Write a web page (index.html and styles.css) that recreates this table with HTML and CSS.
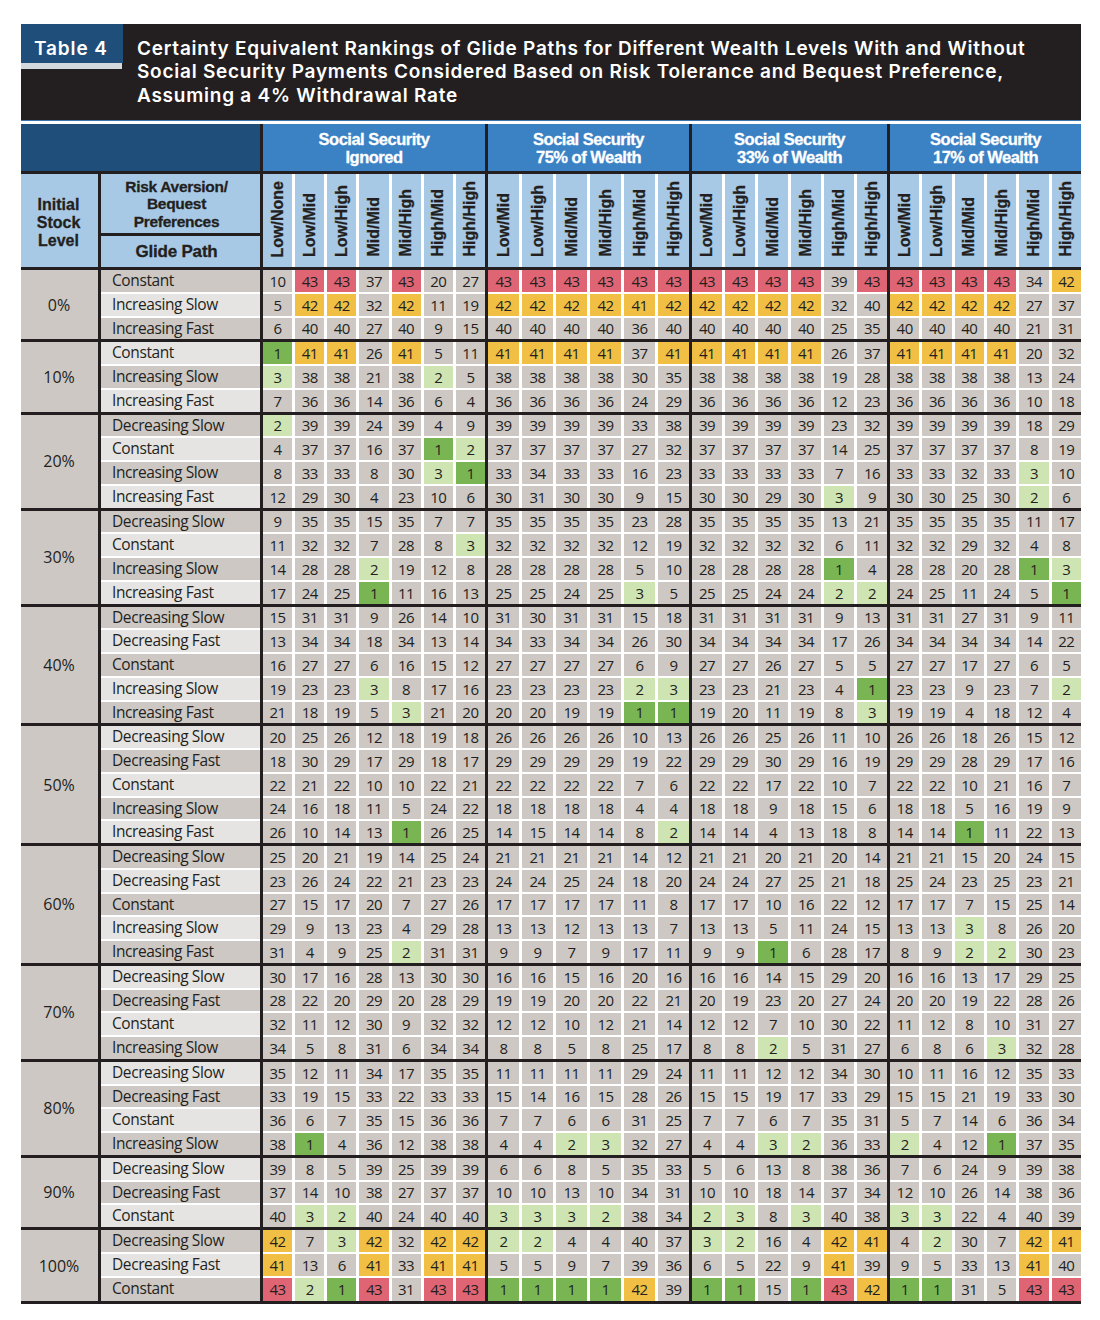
FILE: index.html
```html
<!DOCTYPE html>
<html lang="en">
<head>
<meta charset="utf-8">
<title>Table 4</title>
<link rel="stylesheet" href="styles.css">
</head>
<body>
<div class="page">
  <div class="title">
    <div class="tag"><div class="tag-label">Table 4</div><div class="tag-strip"></div></div>
    <div class="title-text">Certainty Equivalent Rankings of Glide Paths for Different Wealth Levels With and Without<br>Social Security Payments Considered Based on Risk Tolerance and Bequest Preference,<br>Assuming a 4% Withdrawal Rate</div>
  </div>
  <div class="table">
    <div class="row hrow1">
      <div class="corner"></div>
      <div class="ghead w1">Social Security<br>Ignored</div>
      <div class="ghead w2">Social Security<br>75% of Wealth</div>
      <div class="ghead w3">Social Security<br>33% of Wealth</div>
      <div class="ghead w4">Social Security<br>17% of Wealth</div>
    </div>
    <div class="row hrow2">
      <div class="hstock">Initial<br>Stock<br>Level</div>
      <div class="hglide"><div class="hrisk">Risk Aversion/<br>Bequest<br>Preferences</div><div class="hpath">Glide Path</div></div>
      <div class="hcols w1 c7"><div class="vh"><span>Low/None</span></div><div class="vh"><span>Low/Mid</span></div><div class="vh"><span>Low/High</span></div><div class="vh"><span>Mid/Mid</span></div><div class="vh"><span>Mid/High</span></div><div class="vh"><span>High/Mid</span></div><div class="vh"><span>High/High</span></div></div>
      <div class="hcols w2 c6"><div class="vh"><span>Low/Mid</span></div><div class="vh"><span>Low/High</span></div><div class="vh"><span>Mid/Mid</span></div><div class="vh"><span>Mid/High</span></div><div class="vh"><span>High/Mid</span></div><div class="vh"><span>High/High</span></div></div>
      <div class="hcols w3 c6"><div class="vh"><span>Low/Mid</span></div><div class="vh"><span>Low/High</span></div><div class="vh"><span>Mid/Mid</span></div><div class="vh"><span>Mid/High</span></div><div class="vh"><span>High/Mid</span></div><div class="vh"><span>High/High</span></div></div>
      <div class="hcols w4 c6"><div class="vh"><span>Low/Mid</span></div><div class="vh"><span>Low/High</span></div><div class="vh"><span>Mid/Mid</span></div><div class="vh"><span>Mid/High</span></div><div class="vh"><span>High/Mid</span></div><div class="vh"><span>High/High</span></div></div>
    </div>

    <!-- 0% -->
    <div class="row grp">
      <div class="stock">0%</div>
      <div class="glide"><span>Constant</span><span class="a">Increasing Slow</span><span>Increasing Fast</span></div>
      <div class="blk w1 c7">
        <span>10</span><span class="r">43</span><span class="r">43</span><span>37</span><span class="r">43</span><span>20</span><span>27</span>
        <span>5</span><span class="y">42</span><span class="y">42</span><span>32</span><span class="y">42</span><span>11</span><span>19</span>
        <span>6</span><span>40</span><span>40</span><span>27</span><span>40</span><span>9</span><span>15</span>
      </div>
      <div class="blk w2 c6">
        <span class="r">43</span><span class="r">43</span><span class="r">43</span><span class="r">43</span><span class="r">43</span><span class="r">43</span>
        <span class="y">42</span><span class="y">42</span><span class="y">42</span><span class="y">42</span><span class="y">41</span><span class="y">42</span>
        <span>40</span><span>40</span><span>40</span><span>40</span><span>36</span><span>40</span>
      </div>
      <div class="blk w3 c6">
        <span class="r">43</span><span class="r">43</span><span class="r">43</span><span class="r">43</span><span>39</span><span class="r">43</span>
        <span class="y">42</span><span class="y">42</span><span class="y">42</span><span class="y">42</span><span>32</span><span>40</span>
        <span>40</span><span>40</span><span>40</span><span>40</span><span>25</span><span>35</span>
      </div>
      <div class="blk w4 c6">
        <span class="r">43</span><span class="r">43</span><span class="r">43</span><span class="r">43</span><span>34</span><span class="y">42</span>
        <span class="y">42</span><span class="y">42</span><span class="y">42</span><span class="y">42</span><span>27</span><span>37</span>
        <span>40</span><span>40</span><span>40</span><span>40</span><span>21</span><span>31</span>
      </div>
    </div>

    <!-- 10% -->
    <div class="row grp">
      <div class="stock">10%</div>
      <div class="glide"><span class="a">Constant</span><span>Increasing Slow</span><span class="a">Increasing Fast</span></div>
      <div class="blk w1 c7">
        <span class="g">1</span><span class="y">41</span><span class="y">41</span><span>26</span><span class="y">41</span><span>5</span><span>11</span>
        <span class="l">3</span><span>38</span><span>38</span><span>21</span><span>38</span><span class="l">2</span><span>5</span>
        <span>7</span><span>36</span><span>36</span><span>14</span><span>36</span><span>6</span><span>4</span>
      </div>
      <div class="blk w2 c6">
        <span class="y">41</span><span class="y">41</span><span class="y">41</span><span class="y">41</span><span>37</span><span class="y">41</span>
        <span>38</span><span>38</span><span>38</span><span>38</span><span>30</span><span>35</span>
        <span>36</span><span>36</span><span>36</span><span>36</span><span>24</span><span>29</span>
      </div>
      <div class="blk w3 c6">
        <span class="y">41</span><span class="y">41</span><span class="y">41</span><span class="y">41</span><span>26</span><span>37</span>
        <span>38</span><span>38</span><span>38</span><span>38</span><span>19</span><span>28</span>
        <span>36</span><span>36</span><span>36</span><span>36</span><span>12</span><span>23</span>
      </div>
      <div class="blk w4 c6">
        <span class="y">41</span><span class="y">41</span><span class="y">41</span><span class="y">41</span><span>20</span><span>32</span>
        <span>38</span><span>38</span><span>38</span><span>38</span><span>13</span><span>24</span>
        <span>36</span><span>36</span><span>36</span><span>36</span><span>10</span><span>18</span>
      </div>
    </div>

    <!-- 20% -->
    <div class="row grp">
      <div class="stock">20%</div>
      <div class="glide"><span>Decreasing Slow</span><span class="a">Constant</span><span>Increasing Slow</span><span class="a">Increasing Fast</span></div>
      <div class="blk w1 c7">
        <span class="l">2</span><span>39</span><span>39</span><span>24</span><span>39</span><span>4</span><span>9</span>
        <span>4</span><span>37</span><span>37</span><span>16</span><span>37</span><span class="g">1</span><span class="l">2</span>
        <span>8</span><span>33</span><span>33</span><span>8</span><span>30</span><span class="l">3</span><span class="g">1</span>
        <span>12</span><span>29</span><span>30</span><span>4</span><span>23</span><span>10</span><span>6</span>
      </div>
      <div class="blk w2 c6">
        <span>39</span><span>39</span><span>39</span><span>39</span><span>33</span><span>38</span>
        <span>37</span><span>37</span><span>37</span><span>37</span><span>27</span><span>32</span>
        <span>33</span><span>34</span><span>33</span><span>33</span><span>16</span><span>23</span>
        <span>30</span><span>31</span><span>30</span><span>30</span><span>9</span><span>15</span>
      </div>
      <div class="blk w3 c6">
        <span>39</span><span>39</span><span>39</span><span>39</span><span>23</span><span>32</span>
        <span>37</span><span>37</span><span>37</span><span>37</span><span>14</span><span>25</span>
        <span>33</span><span>33</span><span>33</span><span>33</span><span>7</span><span>16</span>
        <span>30</span><span>30</span><span>29</span><span>30</span><span class="l">3</span><span>9</span>
      </div>
      <div class="blk w4 c6">
        <span>39</span><span>39</span><span>39</span><span>39</span><span>18</span><span>29</span>
        <span>37</span><span>37</span><span>37</span><span>37</span><span>8</span><span>19</span>
        <span>33</span><span>33</span><span>32</span><span>33</span><span class="l">3</span><span>10</span>
        <span>30</span><span>30</span><span>25</span><span>30</span><span class="l">2</span><span>6</span>
      </div>
    </div>

    <!-- 30% -->
    <div class="row grp">
      <div class="stock">30%</div>
      <div class="glide"><span>Decreasing Slow</span><span class="a">Constant</span><span>Increasing Slow</span><span class="a">Increasing Fast</span></div>
      <div class="blk w1 c7">
        <span>9</span><span>35</span><span>35</span><span>15</span><span>35</span><span>7</span><span>7</span>
        <span>11</span><span>32</span><span>32</span><span>7</span><span>28</span><span>8</span><span class="l">3</span>
        <span>14</span><span>28</span><span>28</span><span class="l">2</span><span>19</span><span>12</span><span>8</span>
        <span>17</span><span>24</span><span>25</span><span class="g">1</span><span>11</span><span>16</span><span>13</span>
      </div>
      <div class="blk w2 c6">
        <span>35</span><span>35</span><span>35</span><span>35</span><span>23</span><span>28</span>
        <span>32</span><span>32</span><span>32</span><span>32</span><span>12</span><span>19</span>
        <span>28</span><span>28</span><span>28</span><span>28</span><span>5</span><span>10</span>
        <span>25</span><span>25</span><span>24</span><span>25</span><span class="l">3</span><span>5</span>
      </div>
      <div class="blk w3 c6">
        <span>35</span><span>35</span><span>35</span><span>35</span><span>13</span><span>21</span>
        <span>32</span><span>32</span><span>32</span><span>32</span><span>6</span><span>11</span>
        <span>28</span><span>28</span><span>28</span><span>28</span><span class="g">1</span><span>4</span>
        <span>25</span><span>25</span><span>24</span><span>24</span><span class="l">2</span><span class="l">2</span>
      </div>
      <div class="blk w4 c6">
        <span>35</span><span>35</span><span>35</span><span>35</span><span>11</span><span>17</span>
        <span>32</span><span>32</span><span>29</span><span>32</span><span>4</span><span>8</span>
        <span>28</span><span>28</span><span>20</span><span>28</span><span class="g">1</span><span class="l">3</span>
        <span>24</span><span>25</span><span>11</span><span>24</span><span>5</span><span class="g">1</span>
      </div>
    </div>

    <!-- 40% -->
    <div class="row grp">
      <div class="stock">40%</div>
      <div class="glide"><span>Decreasing Slow</span><span class="a">Decreasing Fast</span><span>Constant</span><span class="a">Increasing Slow</span><span>Increasing Fast</span></div>
      <div class="blk w1 c7">
        <span>15</span><span>31</span><span>31</span><span>9</span><span>26</span><span>14</span><span>10</span>
        <span>13</span><span>34</span><span>34</span><span>18</span><span>34</span><span>13</span><span>14</span>
        <span>16</span><span>27</span><span>27</span><span>6</span><span>16</span><span>15</span><span>12</span>
        <span>19</span><span>23</span><span>23</span><span class="l">3</span><span>8</span><span>17</span><span>16</span>
        <span>21</span><span>18</span><span>19</span><span>5</span><span class="l">3</span><span>21</span><span>20</span>
      </div>
      <div class="blk w2 c6">
        <span>31</span><span>30</span><span>31</span><span>31</span><span>15</span><span>18</span>
        <span>34</span><span>33</span><span>34</span><span>34</span><span>26</span><span>30</span>
        <span>27</span><span>27</span><span>27</span><span>27</span><span>6</span><span>9</span>
        <span>23</span><span>23</span><span>23</span><span>23</span><span class="l">2</span><span class="l">3</span>
        <span>20</span><span>20</span><span>19</span><span>19</span><span class="g">1</span><span class="g">1</span>
      </div>
      <div class="blk w3 c6">
        <span>31</span><span>31</span><span>31</span><span>31</span><span>9</span><span>13</span>
        <span>34</span><span>34</span><span>34</span><span>34</span><span>17</span><span>26</span>
        <span>27</span><span>27</span><span>26</span><span>27</span><span>5</span><span>5</span>
        <span>23</span><span>23</span><span>21</span><span>23</span><span>4</span><span class="g">1</span>
        <span>19</span><span>20</span><span>11</span><span>19</span><span>8</span><span class="l">3</span>
      </div>
      <div class="blk w4 c6">
        <span>31</span><span>31</span><span>27</span><span>31</span><span>9</span><span>11</span>
        <span>34</span><span>34</span><span>34</span><span>34</span><span>14</span><span>22</span>
        <span>27</span><span>27</span><span>17</span><span>27</span><span>6</span><span>5</span>
        <span>23</span><span>23</span><span>9</span><span>23</span><span>7</span><span class="l">2</span>
        <span>19</span><span>19</span><span>4</span><span>18</span><span>12</span><span>4</span>
      </div>
    </div>

    <!-- 50% -->
    <div class="row grp">
      <div class="stock">50%</div>
      <div class="glide"><span class="a">Decreasing Slow</span><span>Decreasing Fast</span><span class="a">Constant</span><span>Increasing Slow</span><span class="a">Increasing Fast</span></div>
      <div class="blk w1 c7">
        <span>20</span><span>25</span><span>26</span><span>12</span><span>18</span><span>19</span><span>18</span>
        <span>18</span><span>30</span><span>29</span><span>17</span><span>29</span><span>18</span><span>17</span>
        <span>22</span><span>21</span><span>22</span><span>10</span><span>10</span><span>22</span><span>21</span>
        <span>24</span><span>16</span><span>18</span><span>11</span><span>5</span><span>24</span><span>22</span>
        <span>26</span><span>10</span><span>14</span><span>13</span><span class="g">1</span><span>26</span><span>25</span>
      </div>
      <div class="blk w2 c6">
        <span>26</span><span>26</span><span>26</span><span>26</span><span>10</span><span>13</span>
        <span>29</span><span>29</span><span>29</span><span>29</span><span>19</span><span>22</span>
        <span>22</span><span>22</span><span>22</span><span>22</span><span>7</span><span>6</span>
        <span>18</span><span>18</span><span>18</span><span>18</span><span>4</span><span>4</span>
        <span>14</span><span>15</span><span>14</span><span>14</span><span>8</span><span class="l">2</span>
      </div>
      <div class="blk w3 c6">
        <span>26</span><span>26</span><span>25</span><span>26</span><span>11</span><span>10</span>
        <span>29</span><span>29</span><span>30</span><span>29</span><span>16</span><span>19</span>
        <span>22</span><span>22</span><span>17</span><span>22</span><span>10</span><span>7</span>
        <span>18</span><span>18</span><span>9</span><span>18</span><span>15</span><span>6</span>
        <span>14</span><span>14</span><span>4</span><span>13</span><span>18</span><span>8</span>
      </div>
      <div class="blk w4 c6">
        <span>26</span><span>26</span><span>18</span><span>26</span><span>15</span><span>12</span>
        <span>29</span><span>29</span><span>28</span><span>29</span><span>17</span><span>16</span>
        <span>22</span><span>22</span><span>10</span><span>21</span><span>16</span><span>7</span>
        <span>18</span><span>18</span><span>5</span><span>16</span><span>19</span><span>9</span>
        <span>14</span><span>14</span><span class="g">1</span><span>11</span><span>22</span><span>13</span>
      </div>
    </div>

    <!-- 60% -->
    <div class="row grp">
      <div class="stock">60%</div>
      <div class="glide"><span>Decreasing Slow</span><span class="a">Decreasing Fast</span><span>Constant</span><span class="a">Increasing Slow</span><span>Increasing Fast</span></div>
      <div class="blk w1 c7">
        <span>25</span><span>20</span><span>21</span><span>19</span><span>14</span><span>25</span><span>24</span>
        <span>23</span><span>26</span><span>24</span><span>22</span><span>21</span><span>23</span><span>23</span>
        <span>27</span><span>15</span><span>17</span><span>20</span><span>7</span><span>27</span><span>26</span>
        <span>29</span><span>9</span><span>13</span><span>23</span><span>4</span><span>29</span><span>28</span>
        <span>31</span><span>4</span><span>9</span><span>25</span><span class="l">2</span><span>31</span><span>31</span>
      </div>
      <div class="blk w2 c6">
        <span>21</span><span>21</span><span>21</span><span>21</span><span>14</span><span>12</span>
        <span>24</span><span>24</span><span>25</span><span>24</span><span>18</span><span>20</span>
        <span>17</span><span>17</span><span>17</span><span>17</span><span>11</span><span>8</span>
        <span>13</span><span>13</span><span>12</span><span>13</span><span>13</span><span>7</span>
        <span>9</span><span>9</span><span>7</span><span>9</span><span>17</span><span>11</span>
      </div>
      <div class="blk w3 c6">
        <span>21</span><span>21</span><span>20</span><span>21</span><span>20</span><span>14</span>
        <span>24</span><span>24</span><span>27</span><span>25</span><span>21</span><span>18</span>
        <span>17</span><span>17</span><span>10</span><span>16</span><span>22</span><span>12</span>
        <span>13</span><span>13</span><span>5</span><span>11</span><span>24</span><span>15</span>
        <span>9</span><span>9</span><span class="g">1</span><span>6</span><span>28</span><span>17</span>
      </div>
      <div class="blk w4 c6">
        <span>21</span><span>21</span><span>15</span><span>20</span><span>24</span><span>15</span>
        <span>25</span><span>24</span><span>23</span><span>25</span><span>23</span><span>21</span>
        <span>17</span><span>17</span><span>7</span><span>15</span><span>25</span><span>14</span>
        <span>13</span><span>13</span><span class="l">3</span><span>8</span><span>26</span><span>20</span>
        <span>8</span><span>9</span><span class="l">2</span><span class="l">2</span><span>30</span><span>23</span>
      </div>
    </div>

    <!-- 70% -->
    <div class="row grp">
      <div class="stock">70%</div>
      <div class="glide"><span class="a">Decreasing Slow</span><span>Decreasing Fast</span><span class="a">Constant</span><span>Increasing Slow</span></div>
      <div class="blk w1 c7">
        <span>30</span><span>17</span><span>16</span><span>28</span><span>13</span><span>30</span><span>30</span>
        <span>28</span><span>22</span><span>20</span><span>29</span><span>20</span><span>28</span><span>29</span>
        <span>32</span><span>11</span><span>12</span><span>30</span><span>9</span><span>32</span><span>32</span>
        <span>34</span><span>5</span><span>8</span><span>31</span><span>6</span><span>34</span><span>34</span>
      </div>
      <div class="blk w2 c6">
        <span>16</span><span>16</span><span>15</span><span>16</span><span>20</span><span>16</span>
        <span>19</span><span>19</span><span>20</span><span>20</span><span>22</span><span>21</span>
        <span>12</span><span>12</span><span>10</span><span>12</span><span>21</span><span>14</span>
        <span>8</span><span>8</span><span>5</span><span>8</span><span>25</span><span>17</span>
      </div>
      <div class="blk w3 c6">
        <span>16</span><span>16</span><span>14</span><span>15</span><span>29</span><span>20</span>
        <span>20</span><span>19</span><span>23</span><span>20</span><span>27</span><span>24</span>
        <span>12</span><span>12</span><span>7</span><span>10</span><span>30</span><span>22</span>
        <span>8</span><span>8</span><span class="l">2</span><span>5</span><span>31</span><span>27</span>
      </div>
      <div class="blk w4 c6">
        <span>16</span><span>16</span><span>13</span><span>17</span><span>29</span><span>25</span>
        <span>20</span><span>20</span><span>19</span><span>22</span><span>28</span><span>26</span>
        <span>11</span><span>12</span><span>8</span><span>10</span><span>31</span><span>27</span>
        <span>6</span><span>8</span><span>6</span><span class="l">3</span><span>32</span><span>28</span>
      </div>
    </div>

    <!-- 80% -->
    <div class="row grp">
      <div class="stock">80%</div>
      <div class="glide"><span class="a">Decreasing Slow</span><span>Decreasing Fast</span><span class="a">Constant</span><span>Increasing Slow</span></div>
      <div class="blk w1 c7">
        <span>35</span><span>12</span><span>11</span><span>34</span><span>17</span><span>35</span><span>35</span>
        <span>33</span><span>19</span><span>15</span><span>33</span><span>22</span><span>33</span><span>33</span>
        <span>36</span><span>6</span><span>7</span><span>35</span><span>15</span><span>36</span><span>36</span>
        <span>38</span><span class="g">1</span><span>4</span><span>36</span><span>12</span><span>38</span><span>38</span>
      </div>
      <div class="blk w2 c6">
        <span>11</span><span>11</span><span>11</span><span>11</span><span>29</span><span>24</span>
        <span>15</span><span>14</span><span>16</span><span>15</span><span>28</span><span>26</span>
        <span>7</span><span>7</span><span>6</span><span>6</span><span>31</span><span>25</span>
        <span>4</span><span>4</span><span class="l">2</span><span class="l">3</span><span>32</span><span>27</span>
      </div>
      <div class="blk w3 c6">
        <span>11</span><span>11</span><span>12</span><span>12</span><span>34</span><span>30</span>
        <span>15</span><span>15</span><span>19</span><span>17</span><span>33</span><span>29</span>
        <span>7</span><span>7</span><span>6</span><span>7</span><span>35</span><span>31</span>
        <span>4</span><span>4</span><span class="l">3</span><span class="l">2</span><span>36</span><span>33</span>
      </div>
      <div class="blk w4 c6">
        <span>10</span><span>11</span><span>16</span><span>12</span><span>35</span><span>33</span>
        <span>15</span><span>15</span><span>21</span><span>19</span><span>33</span><span>30</span>
        <span>5</span><span>7</span><span>14</span><span>6</span><span>36</span><span>34</span>
        <span class="l">2</span><span>4</span><span>12</span><span class="g">1</span><span>37</span><span>35</span>
      </div>
    </div>

    <!-- 90% -->
    <div class="row grp">
      <div class="stock">90%</div>
      <div class="glide"><span class="a">Decreasing Slow</span><span>Decreasing Fast</span><span class="a">Constant</span></div>
      <div class="blk w1 c7">
        <span>39</span><span>8</span><span>5</span><span>39</span><span>25</span><span>39</span><span>39</span>
        <span>37</span><span>14</span><span>10</span><span>38</span><span>27</span><span>37</span><span>37</span>
        <span>40</span><span class="l">3</span><span class="l">2</span><span>40</span><span>24</span><span>40</span><span>40</span>
      </div>
      <div class="blk w2 c6">
        <span>6</span><span>6</span><span>8</span><span>5</span><span>35</span><span>33</span>
        <span>10</span><span>10</span><span>13</span><span>10</span><span>34</span><span>31</span>
        <span class="l">3</span><span class="l">3</span><span class="l">3</span><span class="l">2</span><span>38</span><span>34</span>
      </div>
      <div class="blk w3 c6">
        <span>5</span><span>6</span><span>13</span><span>8</span><span>38</span><span>36</span>
        <span>10</span><span>10</span><span>18</span><span>14</span><span>37</span><span>34</span>
        <span class="l">2</span><span class="l">3</span><span>8</span><span class="l">3</span><span>40</span><span>38</span>
      </div>
      <div class="blk w4 c6">
        <span>7</span><span>6</span><span>24</span><span>9</span><span>39</span><span>38</span>
        <span>12</span><span>10</span><span>26</span><span>14</span><span>38</span><span>36</span>
        <span class="l">3</span><span class="l">3</span><span>22</span><span>4</span><span>40</span><span>39</span>
      </div>
    </div>

    <!-- 100% -->
    <div class="row grp last">
      <div class="stock">100%</div>
      <div class="glide"><span>Decreasing Slow</span><span class="a">Decreasing Fast</span><span>Constant</span></div>
      <div class="blk w1 c7">
        <span class="y">42</span><span>7</span><span class="l">3</span><span class="y">42</span><span>32</span><span class="y">42</span><span class="y">42</span>
        <span class="y">41</span><span>13</span><span>6</span><span class="y">41</span><span>33</span><span class="y">41</span><span class="y">41</span>
        <span class="r">43</span><span class="l">2</span><span class="g">1</span><span class="r">43</span><span>31</span><span class="r">43</span><span class="r">43</span>
      </div>
      <div class="blk w2 c6">
        <span class="l">2</span><span class="l">2</span><span>4</span><span>4</span><span>40</span><span>37</span>
        <span>5</span><span>5</span><span>9</span><span>7</span><span>39</span><span>36</span>
        <span class="g">1</span><span class="g">1</span><span class="g">1</span><span class="g">1</span><span class="y">42</span><span>39</span>
      </div>
      <div class="blk w3 c6">
        <span class="l">3</span><span class="l">2</span><span>16</span><span>4</span><span class="y">42</span><span class="y">41</span>
        <span>6</span><span>5</span><span>22</span><span>9</span><span class="y">41</span><span>39</span>
        <span class="g">1</span><span class="g">1</span><span>15</span><span class="g">1</span><span class="r">43</span><span class="y">42</span>
      </div>
      <div class="blk w4 c6">
        <span>4</span><span class="l">2</span><span>30</span><span>7</span><span class="y">42</span><span class="y">41</span>
        <span>9</span><span>5</span><span>33</span><span>13</span><span class="y">41</span><span>40</span>
        <span class="g">1</span><span class="g">1</span><span>31</span><span>5</span><span class="r">43</span><span class="r">43</span>
      </div>
    </div>
  </div>
</div>
</body>
</html>
```

FILE: styles.css
```css
* { box-sizing: border-box; margin: 0; padding: 0; }

body {
  background: #ffffff;
  font-family: "Open Sans", "Noto Sans", sans-serif;
  color: #231f20;
}

.page {
  width: 1060px;
  margin: 24px 0 0 21px;
}

/* ---------- title bar ---------- */
.title {
  display: flex;
  align-items: flex-start;
  height: 97px;
  background: #231f20;
  border-bottom: 1px solid #3a72aa;
}

.tag { width: 102px; flex: none; }

.tag-label {
  height: 39px;
  background: #1f4e7a;
  color: #ffffff;
  font-family: Inter, "DejaVu Sans", sans-serif;
  font-weight: 600;
  font-size: 19px;
  line-height: 19px;
  letter-spacing: 0.9px;
  padding: 15px 0 0 13px;
}

.tag-strip {
  width: 101px;
  height: 6px;
  background: #d4d9de;
}

.title-text {
  margin-left: 14px;
  padding-top: 13px;
  color: #ffffff;
  font-family: Inter, "DejaVu Sans", sans-serif;
  font-weight: 600;
  font-size: 19px;
  line-height: 23.3px;
  letter-spacing: 0.75px;
  white-space: nowrap;
}

/* ---------- table frame ---------- */
.table {
  margin-top: 3px;
  background: #231f20;
  display: flex;
  flex-direction: column;
  gap: 3px;
  padding-bottom: 3px;
}

.row { display: flex; gap: 3px; }

.w1 { width: 222px; }
.w2 { width: 201px; }
.w3 { width: 195px; }
.w4 { width: 191px; }
.c7 { grid-template-columns: repeat(7, 1fr); }
.c6 { grid-template-columns: repeat(6, 1fr); }

.ghead, .hstock, .hrisk, .hpath, .vh span {
  font-family: "Liberation Sans", Arial, sans-serif;
  font-weight: 700;
  -webkit-text-stroke: 0.3px currentColor;
}

/* ---------- header row 1 ---------- */
.hrow1 { height: 47px; }

.corner { width: 239px; background: #1f4e7a; }

.ghead {
  background: #3b82c4;
  color: #ffffff;
  font-size: 16.5px;
  line-height: 18.5px;
  letter-spacing: -0.5px;
  text-align: center;
  display: flex;
  align-items: center;
  justify-content: center;
  padding-top: 1px;
}

/* ---------- header row 2 ---------- */
.hrow2 { height: 93px; }

.hstock {
  width: 77px;
  background: #a7c9e6;
  font-size: 16px;
  line-height: 18px;
  text-align: center;
  display: flex;
  align-items: center;
  justify-content: center;
  padding: 5px 2px 0 0;
}

.hglide {
  width: 159px;
  display: flex;
  flex-direction: column;
  gap: 3px;
}

.hrisk, .hpath {
  background: #a7c9e6;
  text-align: center;
  display: flex;
  align-items: center;
  justify-content: center;
  padding-right: 8px;
}

.hrisk { flex: 1; font-size: 15.5px; line-height: 17.4px; letter-spacing: -0.3px; padding-top: 1px; }
.hpath { height: 31px; font-size: 17px; letter-spacing: -0.2px; }

.hcols {
  display: grid;
  gap: 3px;
  background: #ffffff;
}

.vh {
  background: #a7c9e6;
  display: flex;
  align-items: flex-end;
  justify-content: center;
  padding-bottom: 10px;
}

.vh span {
  writing-mode: vertical-rl;
  transform: rotate(180deg);
  font-size: 16px;
  line-height: 1;
  white-space: nowrap;
}

/* ---------- body groups ---------- */
.stock {
  width: 77px;
  background: #cdc8c4;
  font-size: 16px;
  display: flex;
  align-items: center;
  justify-content: center;
  padding-right: 1px;
}

.glide {
  width: 159px;
  display: grid;
  grid-auto-rows: 21.75px;
  row-gap: 2px;
  background: #ffffff;
}

.glide span {
  background: #cdc8c4;
  font-size: 15.5px;
  line-height: 21.75px;
  padding-left: 11px;
  letter-spacing: -0.4px;
  white-space: nowrap;
}

.glide span.a { background: #e5e4e2; }

.blk {
  display: grid;
  grid-auto-rows: 21.75px;
  gap: 2px 3px;
  background: #ffffff;
}

.blk span {
  background: #cdc8c4;
  font-size: 15px;
  letter-spacing: -0.5px;
  display: flex;
  align-items: center;
  justify-content: center;
}

.blk span.r { background: #e06574; }
.blk span.y { background: #f1bf44; }
.blk span.g { background: #79b653; }
.blk span.l { background: #cfe4b3; }

.last .glide, .last .blk { grid-template-rows: 21.75px 21.75px 23.75px; }
```
